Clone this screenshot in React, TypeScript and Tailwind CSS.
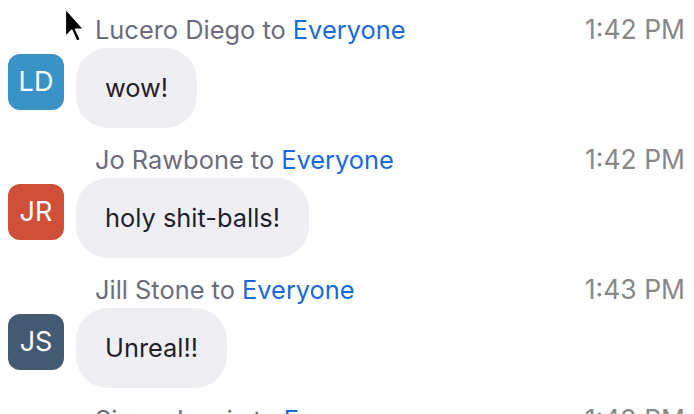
import React from 'react';

type Msg = {
  name: string;
  initials: string;
  avatar: string;
  text: string;
  time: string;
};

const messages: Msg[] = [
  { name: 'Lucero Diego', initials: 'LD', avatar: 'bg-[#3a93c6]', text: 'wow!', time: '1:42 PM' },
  { name: 'Jo Rawbone', initials: 'JR', avatar: 'bg-[#cf5038]', text: 'holy shit-balls!', time: '1:42 PM' },
  { name: 'Jill Stone', initials: 'JS', avatar: 'bg-[#435a72]', text: 'Unreal!!', time: '1:43 PM' },
  { name: 'Simon Lewis', initials: 'SL', avatar: 'bg-[#3a93c6]', text: '', time: '1:43 PM' },
];

function Cursor() {
  return (
    <svg className="absolute left-[62px] top-[6px]" width="24" height="40" viewBox="0 0 22 36">
      <path
        d="M3 2 L3 28 L9 22 L13.5 32 L17 30.5 L12.5 21 L20 21 Z"
        fill="#000"
        stroke="#fff"
        strokeWidth="1.5"
        strokeLinejoin="round"
      />
    </svg>
  );
}

export default function App() {
  return (
    <div className="relative w-[694px] h-[414px] overflow-hidden bg-white font-['Inter','Liberation_Sans',sans-serif] pt-[11px]">
      {messages.map((m, i) => (
        <div key={i} className="mb-[13px]">
          <div className="flex items-center justify-between h-[37px] pl-[95px] pr-[9px] text-[25.4px] leading-none">
            <span className="text-[#6c6c7c]">
              {m.name} to <span className="text-[#1b6ad8]">Everyone</span>
            </span>
            <span className="text-[#888888] text-[26.5px]">{m.time}</span>
          </div>
          <div className="flex items-start gap-3 pl-2">
            <div className={`mt-[6px] w-14 h-14 rounded-xl ${m.avatar} flex items-center justify-center text-white text-[27px]`}>
              {m.initials}
            </div>
            <div className="h-20 rounded-[32px] bg-[#efeff3] px-[29px] flex items-center text-[25.4px] text-[#1f1f2a]">
              {m.text}
            </div>
          </div>
        </div>
      ))}
      <Cursor />
    </div>
  );
}
